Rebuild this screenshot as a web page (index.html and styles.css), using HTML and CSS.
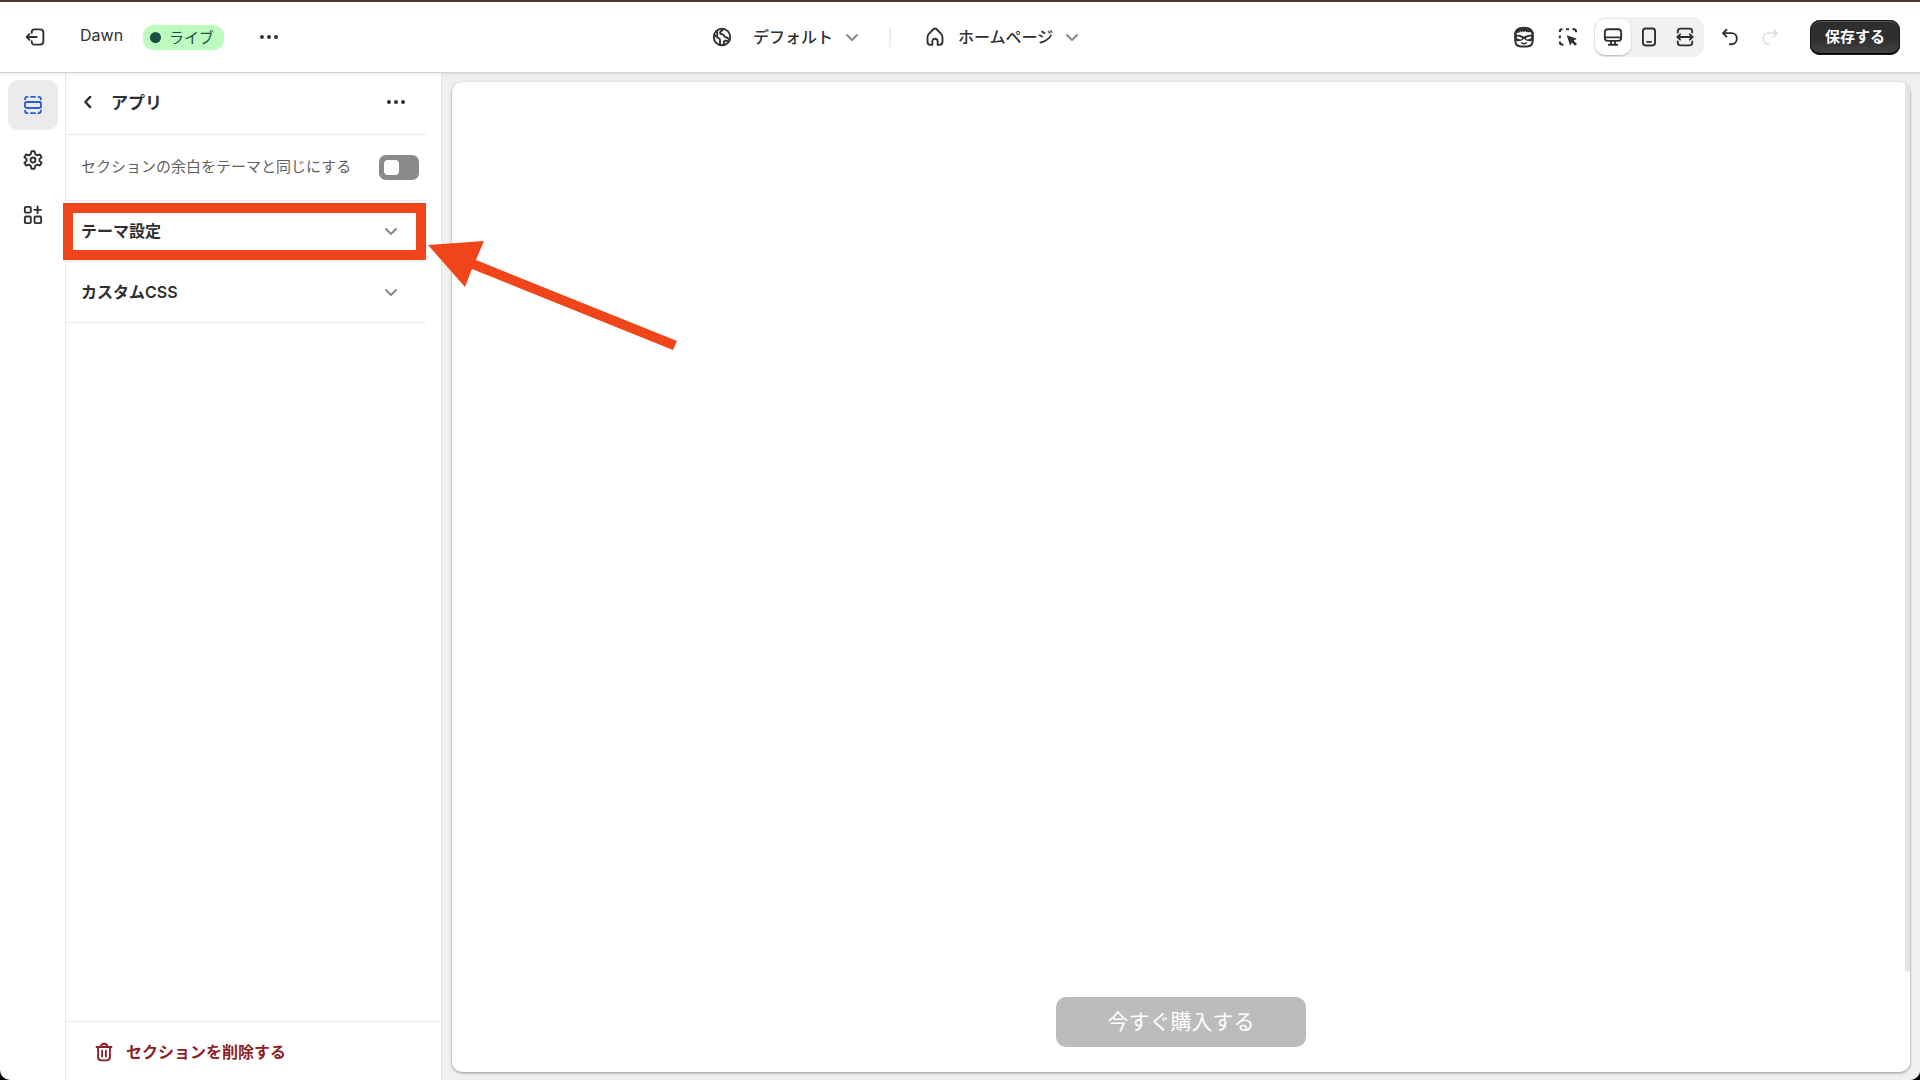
FILE: index.html
```html
<!DOCTYPE html>
<html lang="ja">

<head>
    <meta charset="UTF-8">
    <meta name="viewport" content="width=device-width, initial-scale=1.0">
    <title>Dawn</title>
    <link rel="stylesheet" href="styles.css">
</head>

<body>
    <div class="app">
        <header class="topbar">
            <div class="topbar-left">
                <button class="icon-btn" aria-label="終了">
                    <svg class="icon" viewBox="0 0 20 20"><path d="M7 6.3V5.8C7 4.2 7.9 3.1 9.4 3.1H14.6C16.5 3.1 17.6 4.2 17.6 5.8V14.2C17.6 15.9 16.5 16.9 14.6 16.9H9.4C7.9 16.9 7 15.8 7 14.2V13.7M11.5 10H2.6M5 7.4L2.4 10L5 12.6"/></svg>
                </button>
                <span class="theme-name">Dawn</span>
                <span class="badge"><span class="dot"></span>ライブ</span>
                <button class="icon-btn" aria-label="その他">
                    <svg class="icon solid" viewBox="0 0 20 20"><circle cx="3.6" cy="10" r="1.8"/><circle cx="10" cy="10" r="1.8"/><circle cx="16.4" cy="10" r="1.8"/></svg>
                </button>
            </div>

            <div class="topbar-center">
                <button class="picker market">
                    <svg class="icon" viewBox="0 0 20 20"><circle cx="10" cy="10" r="7.5"/><path d="M11.2 2.7C10.6 4.4 8.2 4.6 8.2 6.2C8.2 7.7 9.6 7.4 10.6 7.6C12 7.9 11.6 9.7 13 10C14.6 10.3 15.4 11.4 16.9 12.4M2.8 8L5.4 10C6.5 10.9 8.3 11.2 8.3 12.8C8.3 14 7.6 14.6 8.4 17.2M5.6 4.3C5 6 6.6 7.2 5.4 10M12 17.2C11.2 15.4 11.6 13.8 13 13.4C14.3 13 15.2 13.8 16 14.4"/></svg>
                    <span>デフォルト</span>
                    <svg class="chevron" viewBox="0 0 16 16"><path d="M3 6L8 11L13 6"/></svg>
                </button>
                <span class="divider"></span>
                <button class="picker">
                    <svg class="icon" viewBox="0 0 20 20"><path d="M3.2 10.2C3.2 9 3.6 8 4.4 7.1L8.3 3.2C9.3 2.2 10.7 2.2 11.7 3.2L15.6 7.1C16.4 8 16.8 9 16.8 10.2V14.6C16.8 16.2 15.8 17.1 14.3 17.1H12.4V14C12.4 12.5 11.5 11.6 10 11.6C8.5 11.6 7.6 12.5 7.6 14V17.1H5.7C4.2 17.1 3.2 16.2 3.2 14.6Z"/></svg>
                    <span>ホームページ</span>
                    <svg class="chevron" viewBox="0 0 16 16"><path d="M3 6L8 11L13 6"/></svg>
                </button>
            </div>

            <div class="topbar-right">
                <button class="icon-btn sidekick" aria-label="Sidekick">
                    <svg class="icon" viewBox="0 0 20 20"><path d="M2.8 6.5V13.2C2.8 16.2 4.6 17.9 7.6 17.9H12.4C15.4 17.9 17.2 16.2 17.2 13.2V6.5"/><path class="fill" d="M2 8.4C1.7 4 4.7 1.5 10 1.5C15.3 1.5 18.3 4 18 8.4H16.6L15.8 6C13.6 6.4 11.7 5.9 10.7 5L10 6.2L8.6 5L8.2 6.3L6.7 5.2L5.8 6.7L4.2 6.3L3.4 8.4Z"/><path class="fill" d="M2 8.2C5 7.9 8 8.3 10 9.7C12 8.3 15 7.9 18 8.2V12C16.8 13.3 15.2 13.6 13.6 13.4C12 13.2 11 12.4 10 11.5C9 12.4 8 13.2 6.4 13.4C4.8 13.6 3.2 13.3 2 12Z"/><path class="eyes" d="M4.8 10.5L7.4 11.2M12.6 11.2L15.2 10.5"/><path class="thin" d="M8.1 14.9C9.3 15.8 10.7 15.8 11.9 14.9"/></svg>
                </button>
                <button class="icon-btn" aria-label="インスペクター">
                    <svg class="icon" viewBox="0 0 20 20"><path class="square-cap" d="M2.6 5.4V5C2.6 3.8 3.4 2.9 4.6 2.9H5M8.1 2.9H11M14 2.9H15.2C16.6 2.9 17.3 3.8 17.3 5V5.6M2.6 8.6V11.2M2.6 14V14.6C2.6 16 3.6 16.9 4.8 16.9H5.8"/><path class="fill" d="M8.8 8.4L18 11.7L15.2 13.4L18.2 16.3L16.4 18L13.5 15.1L12 18Z"/></svg>
                </button>
                <div class="devices">
                    <button class="device active" aria-label="デスクトップ">
                        <svg class="icon" viewBox="0 0 20 20"><rect x="2.6" y="2.9" width="14.8" height="10.6" rx="2.6"/><path d="M3 10.3H17M8.2 14V17M11.8 14V17M6.2 17H13.8"/></svg>
                    </button>
                    <button class="device" aria-label="モバイル">
                        <svg class="icon" viewBox="0 0 20 20"><rect x="4.5" y="2.3" width="11" height="15.4" rx="2.4"/><path d="M8.2 14.4H11.8"/></svg>
                    </button>
                    <button class="device" aria-label="全画面">
                        <svg class="icon" viewBox="0 0 20 20"><path d="M3.4 6V5C3.4 3.4 4.4 2.4 6 2.4H14C15.6 2.4 16.6 3.4 16.6 5V6M3.4 14V15C3.4 16.6 4.4 17.6 6 17.6H14C15.6 17.6 16.6 16.6 16.6 15V14M3.2 10H16.8M5.6 7.6L3 10L5.6 12.4M14.4 7.6L17 10L14.4 12.4"/></svg>
                    </button>
                </div>
                <button class="icon-btn" aria-label="元に戻す">
                    <svg class="icon" viewBox="0 0 20 20"><path d="M6.8 3.4L3.6 6.5L6.8 9.6M3.8 6.5H11.4C14.4 6.5 16.2 8.7 16.2 11.4C16.2 14.4 14.2 16.6 11.2 16.6H9.8"/></svg>
                </button>
                <button class="icon-btn" aria-label="やり直す" disabled>
                    <svg class="icon" viewBox="0 0 20 20"><path d="M13.2 3.4L16.4 6.5L13.2 9.6M16.2 6.5H8.6C5.6 6.5 3.8 8.7 3.8 11.4C3.8 14.4 5.8 16.6 8.8 16.6H9"/></svg>
                </button>
                <button class="save">保存する</button>
            </div>
        </header>

        <div class="workspace">
            <nav class="rail">
                <button class="rail-btn active" aria-label="セクション">
                    <svg class="icon" viewBox="0 0 20 20"><rect x="2.7" y="7.3" width="14.6" height="5.4" rx="1.6"/><path d="M2.8 4.8C2.8 3.4 3.6 2.6 5 2.6M8.2 2.6H11.8M15 2.6C16.4 2.6 17.2 3.4 17.2 4.8M2.8 15.2C2.8 16.6 3.6 17.4 5 17.4M8.2 17.4H11.8M15 17.4C16.4 17.4 17.2 16.6 17.2 15.2"/></svg>
                </button>
                <button class="rail-btn" aria-label="テーマ設定">
                    <svg class="icon" viewBox="0 0 20 20"><path d="M8.6 2H11.4L12 4.7L13.8 5.8L16.3 5L17.8 7.5L15.9 9.1V10.9L17.8 12.5L16.3 15L13.8 14.2L12 15.3L11.4 18H8.6L8 15.3L6.2 14.2L3.7 15L2.2 12.5L4.1 10.9V9.1L2.2 7.5L3.7 5L6.2 5.8L8 4.7Z"/><circle cx="10" cy="10" r="2.3"/></svg>
                </button>
                <button class="rail-btn" aria-label="アプリ">
                    <svg class="icon" viewBox="0 0 20 20"><rect x="2.6" y="2.6" width="5.4" height="5.2" rx="1"/><rect x="2.6" y="11.4" width="5.4" height="6" rx="1"/><rect x="11.4" y="11.4" width="6" height="6" rx="1"/><path d="M14.2 2.3V8.3M11.2 5.3H17.2"/></svg>
                </button>
            </nav>

            <aside class="panel">
                <div class="panel-head">
                    <button class="icon-btn" aria-label="戻る">
                        <svg class="icon" viewBox="0 0 20 20"><path class="bold" d="M12 5.4L7.6 10L12 14.6"/></svg>
                    </button>
                    <h1>アプリ</h1>
                    <button class="icon-btn" aria-label="その他">
                        <svg class="icon solid" viewBox="0 0 20 20"><circle cx="3.6" cy="10" r="1.8"/><circle cx="10" cy="10" r="1.8"/><circle cx="16.4" cy="10" r="1.8"/></svg>
                    </button>
                </div>

                <div class="setting">
                    <label for="margin">セクションの余白をテーマと同じにする</label>
                    <input type="checkbox" id="margin" class="toggle">
                </div>

                <div class="group">
                    <button class="accordion">
                        <span>テーマ設定</span>
                        <svg class="chevron" viewBox="0 0 16 16"><path d="M3 6L8 11L13 6"/></svg>
                    </button>
                    <div class="highlight"></div>
                    <svg class="arrow" viewBox="0 0 250 112"><path d="M0 5L56 1L48 20L249 101L245 110L44 29L37 47Z"/></svg>
                </div>
                <div class="group">
                    <button class="accordion">
                        <span>カスタムCSS</span>
                        <svg class="chevron" viewBox="0 0 16 16"><path d="M3 6L8 11L13 6"/></svg>
                    </button>
                </div>

                <div class="panel-foot">
                    <button class="delete">
                        <svg class="icon" viewBox="0 0 20 20"><path d="M3.2 5.5H16.8M7 5.3C7 3.6 8.3 2.5 10 2.5C11.7 2.5 13 3.6 13 5.3M4.6 5.7V14.5C4.6 16.6 5.6 17.6 7.7 17.6H12.3C14.4 17.6 15.4 16.6 15.4 14.5V5.7M8.3 8.8V14M11.7 8.8V14"/></svg>
                        <span>セクションを削除する</span>
                    </button>
                </div>
            </aside>

            <main class="stage">
                <div class="preview">
                    <button class="buy">今すぐ購入する</button>
                    <div class="scrollbar"></div>
                </div>
            </main>
        </div>
    </div>
</body>

</html>
```
FILE: styles.css
```css
* {
    margin: 0;
    padding: 0;
    box-sizing: border-box;
}

body {
    background: #000000;
    font-family: Inter, "Noto Sans CJK JP", sans-serif;
    font-size: 16px;
    color: #303030;
}

button {
    border: none;
    background: none;
    font: inherit;
    color: inherit;
    cursor: pointer;
}

.app {
    display: flex;
    flex-direction: column;
    height: 100vh;
    background: #ffffff;
    border-top: 2px solid #4f3632;
    border-radius: 0 0 10px 10px;
    overflow: hidden;
}

/* icons */
.icon {
    display: block;
    flex: none;
    width: 22px;
    height: 22px;
    margin: 1px;
    fill: none;
    stroke: currentColor;
    stroke-width: 1.7;
    stroke-linecap: round;
    stroke-linejoin: round;
}

.icon.solid,
.icon .fill {
    fill: currentColor;
    stroke: none;
}

.icon .square-cap {
    stroke-width: 1.9;
    stroke-linecap: butt;
}

.icon .eyes {
    stroke: #ffffff;
}

.icon .thin {
    stroke-width: 1.3;
}

.icon .bold {
    stroke-width: 2.2;
}

.chevron {
    flex: none;
    width: 16px;
    height: 16px;
    fill: none;
    stroke: #8a8a8a;
    stroke-width: 2;
    stroke-linecap: round;
    stroke-linejoin: round;
}

.icon-btn {
    padding: 5px;
}

.icon-btn:disabled {
    color: #e0e0e0;
}

/* top bar */
.topbar {
    display: flex;
    justify-content: space-between;
    align-items: center;
    height: 71px;
    padding: 0 20px 0 18px;
    border-bottom: 1px solid #d4d4d4;
    box-shadow: 0 1px 3px rgba(0, 0, 0, 0.1);
    position: relative;
    z-index: 1;
}

.topbar-left,
.topbar-center,
.topbar-right {
    display: flex;
    align-items: center;
}

.theme-name {
    margin: 0 20px 0 28px;
    padding-bottom: 4px;
}

.badge {
    display: flex;
    align-items: center;
    gap: 8px;
    height: 25px;
    margin-right: 28px;
    padding: 0 10px 2px 7px;
    border-radius: 10px;
    background: #bdfcbf;
    color: #1a4f41;
    font-size: 15px;
}

.dot {
    width: 11px;
    height: 11px;
    margin-top: 2px;
    border-radius: 50%;
    background: currentColor;
}

.picker {
    display: flex;
    align-items: center;
    gap: 11px;
    height: 40px;
    font-weight: 500;
}

.picker span {
    padding-bottom: 2px;
}

.market span {
    margin-left: 8px;
}

.divider {
    width: 2px;
    height: 20px;
    margin: 0 32px 0 29px;
    background: #ebebeb;
}

.topbar-right .icon-btn {
    padding: 8px;
}

.topbar-right .sidekick {
    margin-right: 4px;
}

.sidekick .icon {
    width: 24px;
    height: 24px;
    margin: 0;
}

.devices {
    display: flex;
    margin: 0 6px;
    padding: 2px 1px;
    border-radius: 12px;
    background: #f1f1f1;
}

.device {
    padding: 6px;
    border-radius: 10px;
}

.device.active {
    background: #ffffff;
    box-shadow: 0 1px 2px rgba(0, 0, 0, 0.25);
}

.save {
    height: 35px;
    margin-left: 20px;
    padding: 0 15px 3px;
    border-radius: 10px;
    background: linear-gradient(#2e2e2e 50%, #454545);
    box-shadow: inset 0 0 0 1px #1a1a1a, inset 0 -2px 0 #000000, inset 0 2px 0 #555555;
    color: #ffffff;
    font-size: 15px;
    font-weight: 600;
}

/* workspace */
.workspace {
    display: flex;
    flex: 1;
    min-height: 0;
}

.rail {
    display: flex;
    flex-direction: column;
    gap: 5px;
    padding: 7px 7px 0 8px;
    border-right: 1px solid #e8e8e8;
}

.rail-btn {
    padding: 13px;
    border-radius: 10px;
}

.rail-btn.active {
    background: #ebebeb;
    color: #2c5cdc;
}

.panel {
    display: flex;
    flex-direction: column;
    flex: none;
    width: 376px;
    border-right: 1px solid #e3e3e3;
    position: relative;
    z-index: 2;
}

.panel-head,
.setting,
.group {
    display: flex;
    align-items: center;
    margin-right: 15px;
    border-bottom: 1px solid #e8e8e8;
}

.panel-head {
    height: 62px;
    padding: 0 13px 4px 5px;
}

.panel-head h1 {
    flex: 1;
    margin-left: 6px;
    font-size: 17px;
    font-weight: 600;
}

.setting {
    justify-content: space-between;
    height: 66px;
    padding: 0 7px 0 15px;
    color: #616161;
    font-size: 15px;
}

.setting label {
    padding-bottom: 4px;
}

.toggle {
    display: flex;
    appearance: none;
    width: 40px;
    height: 25px;
    padding: 5px;
    border-radius: 7px;
    background: #8a8a8a;
    cursor: pointer;
}

.toggle::before {
    content: "";
    width: 15px;
    height: 15px;
    border-radius: 4px;
    background: #ffffff;
}

.toggle:checked {
    justify-content: flex-end;
    background: #303030;
}

.group {
    height: 61px;
    position: relative;
}

.accordion {
    display: flex;
    justify-content: space-between;
    align-items: center;
    width: 100%;
    height: 58px;
    padding: 0 27px 0 15px;
    font-weight: 600;
}

.accordion span {
    padding-bottom: 3px;
}

/* annotation laid over the row */
.highlight {
    position: absolute;
    top: 2px;
    right: 0;
    bottom: 1px;
    left: -3px;
    border: 10px solid #f0441b;
    pointer-events: none;
}

.arrow {
    position: absolute;
    top: 39px;
    left: 362px;
    width: 250px;
    height: 112px;
    fill: #f0441b;
    pointer-events: none;
}

.panel-foot {
    margin-top: auto;
    padding: 10px 24px 8px;
    border-top: 1px solid #e8e8e8;
}

.delete {
    display: flex;
    align-items: center;
    gap: 10px;
    height: 40px;
    padding: 0 2px;
    color: #8e1f25;
    font-weight: 600;
}

.delete span {
    padding-bottom: 2px;
}

.stage {
    display: flex;
    flex: 1;
    padding: 9px 10px 8px;
    background: #f0f0f0;
}

.preview {
    display: flex;
    flex: 1;
    justify-content: center;
    align-items: flex-end;
    padding-bottom: 25px;
    border-radius: 10px;
    background: #ffffff;
    box-shadow: 0 1px 3px rgba(0, 0, 0, 0.4);
    overflow: hidden;
    position: relative;
}

.buy {
    width: 250px;
    height: 50px;
    padding-bottom: 4px;
    border-radius: 10px;
    background: #bcbcbc;
    color: #ffffff;
    font-size: 21px;
}

.scrollbar {
    position: absolute;
    top: 0;
    right: 0;
    bottom: 100px;
    width: 5px;
    border-radius: 0 0 3px 3px;
    background: #e3e3e3;
}
```
